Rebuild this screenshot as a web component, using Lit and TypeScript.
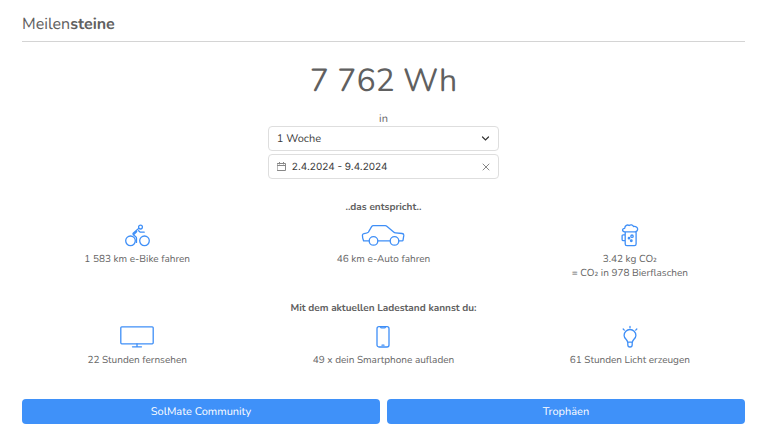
import { LitElement, html, css, nothing, TemplateResult } from "lit";
import { customElement, property } from "lit/decorators.js";

const icons: Record<string, TemplateResult> = {
  bike: html`<svg width="26" height="24" viewBox="0 0 26 24">
    <circle cx="6.500" cy="16.800" r="4.800" /><circle cx="20.500" cy="16.800" r="4.800" />
    <circle cx="16.500" cy="3.100" r="1.900" />
    <path d="M14.600 4.500 9.400 8.900c-.7.8-.5 1.500.2 2l2.200 1.900c.5.4.7.8.7 1.400v4.200M9.600 10.800l3.200-3.200M14.600 6.700l1.700 1.500h3.900" />
  </svg>`,
  car: html`<svg width="44" height="24" viewBox="0 0 44 24">
    <circle cx="12.500" cy="16.900" r="4.300" /><circle cx="33.500" cy="16.900" r="4.300" />
    <path d="M8 16.900H2.600c-.6-1.200-1.200-2.900-1.200-5.800.1-.9.7-1.400 1.600-1.500 1.900-.2 3.600-.5 4.400-1.500l3.200-5.400c.4-.6.9-1 1.700-1h11.900c.8 0 1.300.2 1.900.7l6.500 5.600c.6.5 1.100.7 1.900.8l6.700.7c1.200.2 1.700.8 1.600 1.900l-.8 4.900c-.1.500-.4.600-.8.600h-3.300M17 16.900h12" />
  </svg>`,
  beer: html`<svg width="18" height="24" viewBox="0 0 18 24">
    <path d="M4.200 8.500v11.500c0 1.100.6 1.600 1.700 1.600h7.500c1.100 0 1.700-.5 1.700-1.600V8.500M4.200 10.800H2.300c-.8 0-1.200.5-1.200 1.200v3.500c0 .8.4 1.200 1.200 1.200h1.900M4.500 7.800H15" />
    <path d="M3.800 7.800C.8 7.800.9 4.400 3.700 4.300 3.900 1.400 6.400.3 8.100 1.600c1.500-1.200 3.700-.8 4.400.9 2.600-.4 4.600 1.300 4 3.300-.2 1-.7 1.500-1.500 1.700" />
    <circle cx="11" cy="12.200" r="1.200" /><circle cx="8" cy="14.200" r=".7" /><circle cx="10.300" cy="16.800" r=".8" />
  </svg>`,
  tv: html`<svg width="34" height="24" viewBox="0 0 34 24">
    <rect x=".8" y="1.800" width="32.400" height="17" rx="1" /><path d="M17 19v2.700M12.500 21.800h9" />
  </svg>`,
  phone: html`<svg width="14" height="24" viewBox="0 0 14 24">
    <rect x="1" y="1.700" width="12" height="20.300" rx="2" /><path d="M4.500 1.800c.2.900.6 1.100 1.200 1.100h2.600c.6 0 1-.2 1.200-1.100M6 20.200h2" />
  </svg>`,
  bulb: html`<svg width="16" height="24" viewBox="0 0 16 24">
    <path d="M5.600 17.200c0-2.500-3.500-3.500-3.500-6.800a5.900 5.900 0 0 1 11.800 0c0 3.300-3.500 4.300-3.500 6.800zM5.800 17.200v2.600c0 1.300.9 2.200 2.200 2.200s2.200-.9 2.200-2.200v-2.600M8 1.500v1.200M1.200 4l1.100 1.100M14.800 4l-1.100 1.100" />
  </svg>`,
};

@customElement("milestone-item")
class MilestoneItem extends LitElement {
  @property() icon = "";
  @property() label = "";
  @property() detail = "";

  static styles = css`
    :host {
      display: flex;
      flex-direction: column;
      align-items: center;
      gap: 4px;
      font-size: 10px;
      text-align: center;
    }
    svg {
      display: block;
      fill: none;
      stroke: #3f8ff7;
      stroke-width: 1.3;
      stroke-linecap: round;
      stroke-linejoin: round;
    }
    p {
      margin: 0;
      line-height: 14px;
    }
  `;

  render() {
    return html`${icons[this.icon]}
      <p>${this.label}${this.detail ? html`<br />${this.detail}` : nothing}</p>`;
  }
}

@customElement("app-root")
class AppRoot extends LitElement {
  static styles = css`
    :host {
      display: block;
      padding: 12px 23px 14px 22px;
      background: #fff;
      color: #666;
      font: 11px/14px Nunito, Lato, sans-serif;
      text-rendering: geometricPrecision;
    }
    * {
      box-sizing: border-box;
    }
    h1 {
      margin: 0;
      padding-bottom: 5px;
      border-bottom: 1px solid #d4d4d4;
      font-size: 16px;
      font-weight: 400;
      line-height: 24px;
      color: #606060;
    }
    h1 b {
      font-weight: 700;
    }
    .total {
      margin: 18px 0 8px;
      font-size: 32px;
      line-height: 44px;
      color: #606060;
      text-align: center;
    }
    .period {
      display: flex;
      flex-direction: column;
      gap: 3px;
      width: 32%;
      min-width: 220px;
      margin: 0 auto;
      text-align: center;
    }
    .in {
      margin-bottom: -3px;
      line-height: 14px;
    }
    .field {
      display: flex;
      align-items: center;
      height: 25px;
      padding: 0 8px;
      border: 1px solid #dedede;
      border-radius: 4px;
      color: #3c3c3c;
    }
    .field svg {
      flex: none;
      fill: none;
      stroke: #888;
      stroke-linecap: round;
    }
    .field .chevron {
      stroke: #333;
      stroke-width: 1.2;
      pointer-events: none;
    }
    select,
    input {
      flex: 1;
      min-width: 0;
      height: 100%;
      padding: 0;
      border: 0;
      outline: 0;
      appearance: none;
      background: none;
      color: inherit;
      font: inherit;
      text-rendering: inherit;
    }
    input {
      margin-left: 6px;
      font-family: Inter, sans-serif;
      font-size: 10px;
    }
    .clear {
      display: flex;
      padding: 0;
      border: 0;
      background: none;
    }
    h2 {
      margin: 0;
      font-size: 10px;
      font-weight: 700;
      line-height: 14px;
      color: #606060;
      text-align: center;
    }
    section {
      margin-top: 21px;
    }
    .items {
      display: grid;
      grid-template-columns: repeat(3, 1fr);
      margin: 10px -8px 0;
    }
    .actions {
      display: grid;
      grid-template-columns: 1fr 1fr;
      gap: 7px;
      margin-top: 32px;
    }
    .actions button {
      height: 25px;
      padding: 0;
      border: 0;
      border-radius: 4px;
      background: #3f91f9;
      color: #fff;
      font: inherit;
      text-rendering: inherit;
    }
  `;

  render() {
    return html`
      <h1>Meilen<b>steine</b></h1>
      <div class="total">7 762 Wh</div>
      <div class="period">
        <div class="in">in</div>
        <div class="field">
          <select aria-label="Zeitraum"><option>1 Woche</option></select>
          <svg class="chevron" width="9" height="9" viewBox="0 0 9 9"><path d="m1.500 3 3 3 3-3" /></svg>
        </div>
        <div class="field">
          <svg width="9" height="9" viewBox="0 0 9 9"><path d="M.5 1.500h8v7h-8zM.5 3.500h8M2.500 0v2M6.500 0v2" /></svg>
          <input aria-label="Datum" value="2.4.2024 - 9.4.2024" />
          <button class="clear" aria-label="Datum löschen">
            <svg width="8" height="8" viewBox="0 0 8 8"><path d="m1 1 6 6M7 1 1 7" /></svg>
          </button>
        </div>
      </div>
      <section>
        <h2>..das entspricht..</h2>
        <div class="items">
          <milestone-item icon="bike" label="1 583 km e-Bike fahren"></milestone-item>
          <milestone-item icon="car" label="46 km e-Auto fahren"></milestone-item>
          <milestone-item icon="beer" label="3.42 kg CO₂" detail="= CO₂ in 978 Bierflaschen"></milestone-item>
        </div>
      </section>
      <section>
        <h2>Mit dem aktuellen Ladestand kannst du:</h2>
        <div class="items">
          <milestone-item icon="tv" label="22 Stunden fernsehen"></milestone-item>
          <milestone-item icon="phone" label="49 x dein Smartphone aufladen"></milestone-item>
          <milestone-item icon="bulb" label="61 Stunden Licht erzeugen"></milestone-item>
        </div>
      </section>
      <div class="actions">
        <button>SolMate Community</button>
        <button>Trophäen</button>
      </div>
    `;
  }
}
